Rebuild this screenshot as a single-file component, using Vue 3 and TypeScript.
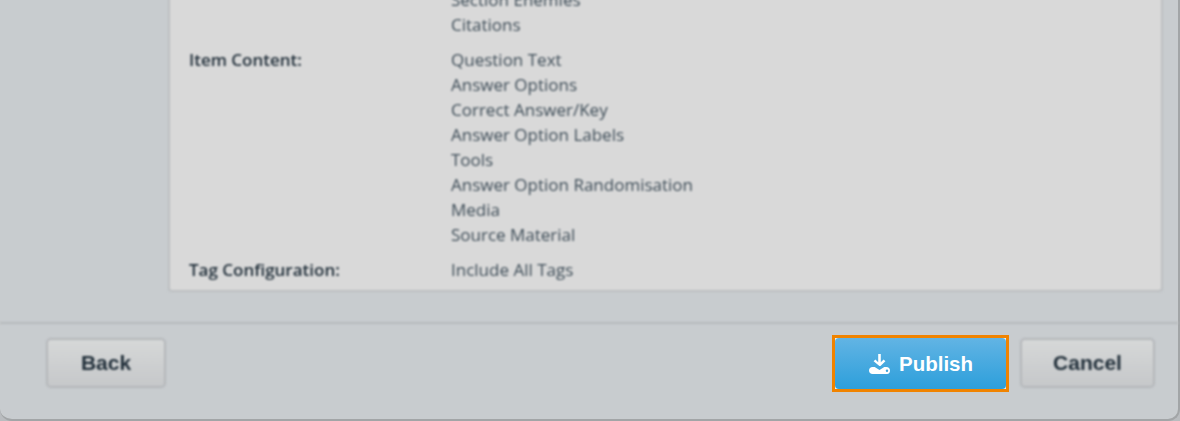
<script setup lang="ts">
interface Row {
  label: string;
  values: string[];
}

const rows: Row[] = [
  { label: '', values: ['Section Enemies', 'Citations'] },
  {
    label: 'Item Content:',
    values: [
      'Question Text',
      'Answer Options',
      'Correct Answer/Key',
      'Answer Option Labels',
      'Tools',
      'Answer Option Randomisation',
      'Media',
      'Source Material',
    ],
  },
  { label: 'Tag Configuration:', values: ['Include All Tags'] },
];
</script>

<template>
  <div class="page">
    <div class="dialog">
      <div class="body">
        <div class="card">
          <div v-for="row in rows" :key="row.label" class="row">
            <div class="label">{{ row.label }}</div>
            <div class="values">
              <div v-for="v in row.values" :key="v">{{ v }}</div>
            </div>
          </div>
        </div>
      </div>
      <div class="footer">
        <button class="btn soft">Back</button>
        <div class="right">
          <div class="focus-ring">
            <button class="btn publish">
              <svg width="23" height="22" viewBox="0 0 23 22" fill="#fff">
                <path d="M10.200 1h2.600v8.200l2.800-2.800 1.800 1.800-4.900 4.900h-1.100L5.600 8.200l1.800-1.800 2.800 2.800z" />
                <path d="M1 17.500c0-2 1.500-3.500 3.500-3.500h2.200l4.800 2.900 4.800-2.900h2.200c2 0 3.500 1.500 3.500 3.500S21 21 19 21H4.500C2.500 21 1 19.500 1 17.500z" />
                <circle cx="19" cy="17.700" r="1.200" fill="#3fa4dc" />
              </svg>
              Publish
            </button>
          </div>
          <button class="btn soft">Cancel</button>
        </div>
      </div>
    </div>
  </div>
</template>

<style>
html, body {
  margin: 0;
  background: #c8cbce;
}
</style>

<style scoped>
.page {
  width: 1180px;
  height: 421px;
  overflow: hidden;
  display: flex;
  flex-direction: column;
  justify-content: flex-end;
  background: #b9bcbf;
}
.dialog {
  width: 1180px;
  flex-shrink: 0;
  background: #c8cccf;
  border-right: 2px solid #a2a5a7;
  border-bottom: 2px solid #a2a5a7;
  border-radius: 0 0 12px 12px;
  box-sizing: border-box;
}
.body {
  padding: 0 15px 30px 168px;
  border-bottom: 2px solid #b6b9bc;
  filter: blur(0.8px);
}
.card {
  background: #d9d9d9;
  border: 2px solid #bcbfc1;
  border-top: 0;
  border-radius: 0 0 4px 4px;
  padding-bottom: 8px;
  font-family: "Open Sans", sans-serif;
  font-size: 17px;
  line-height: 25px;
  color: #3d4c57;
}
.row {
  display: grid;
  grid-template-columns: 262px 1fr;
  margin-bottom: 10px;
  padding-left: 19px;
}
.row:last-child {
  margin-bottom: 0;
}
.label {
  font-weight: 600;
  color: #1f2d38;
}
.footer {
  display: flex;
  justify-content: space-between;
  align-items: center;
  height: 95px;
  padding: 0 23px 16px 46px;
  box-sizing: border-box;
}
.right {
  display: flex;
  align-items: center;
  gap: 11px;
}
.btn {
  font-family: "Liberation Sans", sans-serif;
  font-size: 21px;
  font-weight: 700;
  border-radius: 5px;
  cursor: pointer;
  padding: 0;
}
.soft {
  height: 50px;
  margin-bottom: 2px;
  color: #1f2d38;
  border: 2px solid #b4b7ba;
  background: linear-gradient(#d6d8d8, #c6c8ca);
  filter: blur(0.8px);
}
.footer > .soft {
  width: 120px;
}
.right .soft {
  width: 135px;
}
.focus-ring {
  width: 177px;
  height: 57px;
  box-sizing: border-box;
  border: 3px solid #f08300;
  background: #e8f0f4;
}
.publish {
  width: 100%;
  height: 100%;
  display: flex;
  align-items: center;
  justify-content: center;
  gap: 8px;
  font-size: 20.5px;
  color: #fff;
  border: 0;
  border-radius: 4px;
  background: linear-gradient(#62b4e4, #2d9fdb);
}
</style>
